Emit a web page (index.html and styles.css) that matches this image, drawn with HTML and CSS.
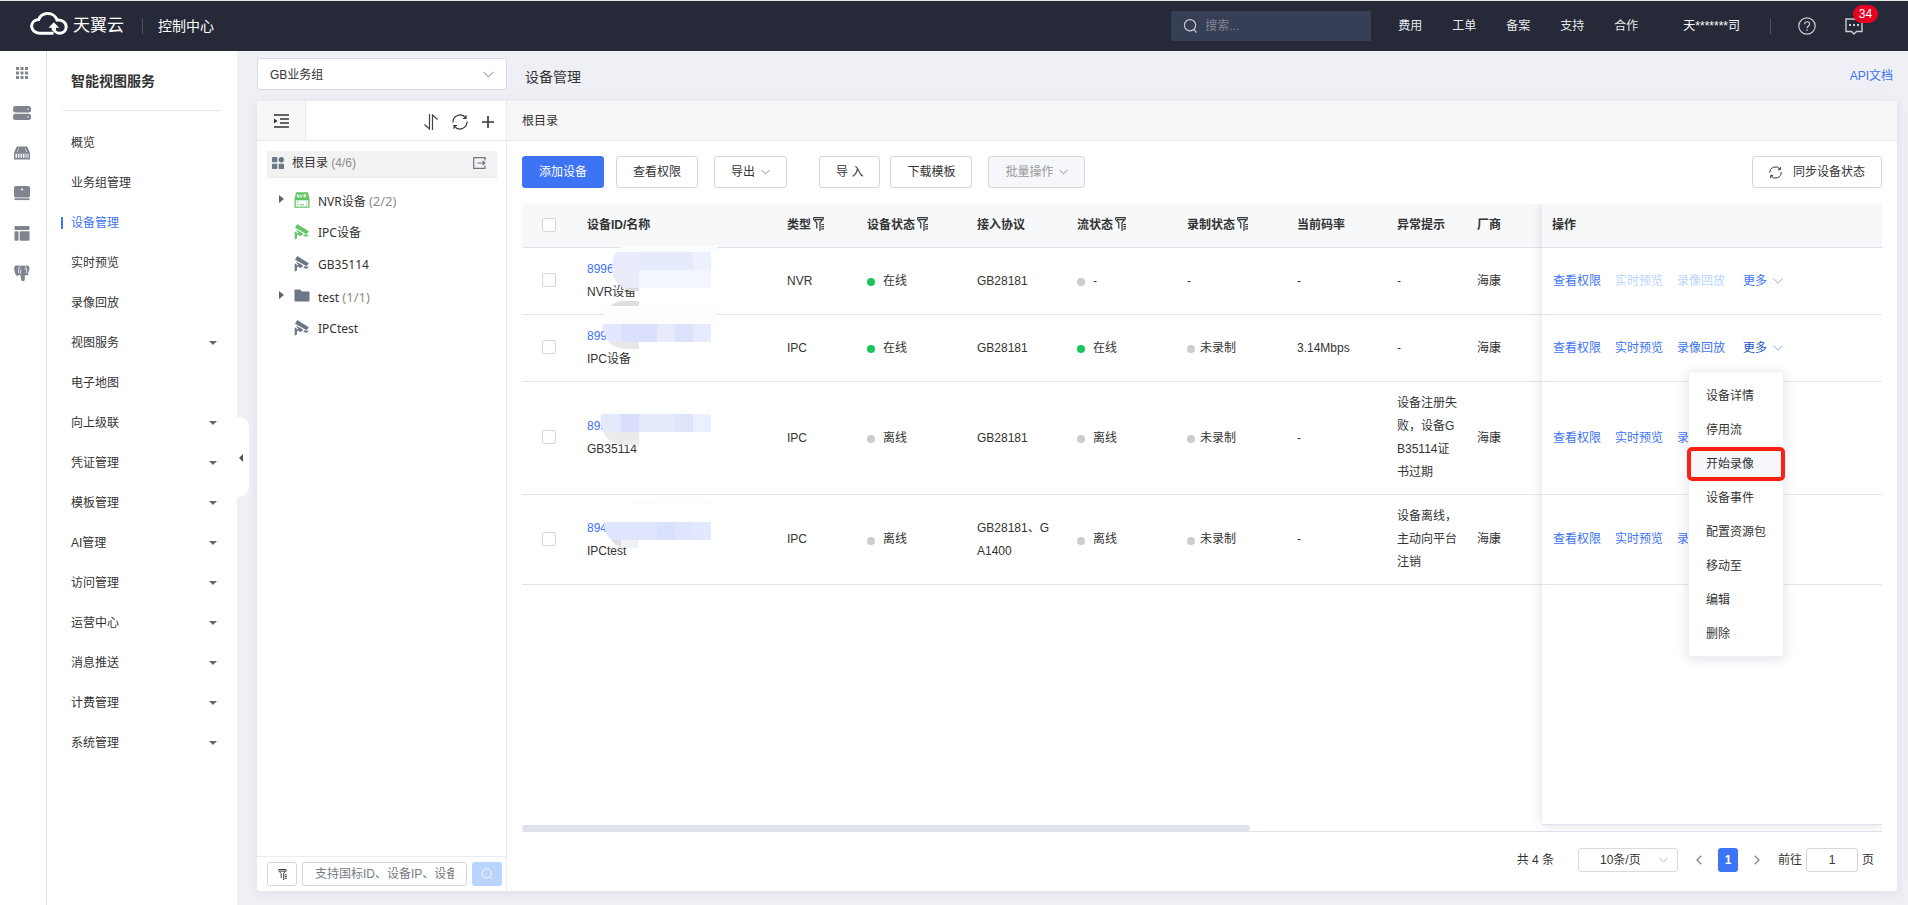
FILE: index.html
```html
<!DOCTYPE html>
<html lang="zh-CN">
<head>
<meta charset="utf-8">
<title>设备管理</title>
<link rel="stylesheet" href="styles.css">
</head>
<body>
<svg class="defs" aria-hidden="true">
  <symbol id="chevron" viewBox="0 0 10 6"><path d="M.5.7 5 5.200 9.500.7" fill="none" stroke="currentColor"/></symbol>
  <symbol id="caret" viewBox="0 0 8 4"><path d="M0 0h8L4 4z" fill="currentColor"/></symbol>
  <symbol id="caret-right" viewBox="0 0 5 8"><path d="M0 0l5 4-5 4z" fill="currentColor"/></symbol>
  <symbol id="filter" viewBox="0 0 11 14"><path d="M.6.7h9.600v1.600L7 5.500V14M.6.7v1.600l3.200 3.500v5.700M2 2.700h7M8.300 7.500H11M8.300 9.700H11M8.300 11.900H11" fill="none" stroke="currentColor" stroke-width="1.200"/></symbol>
  <symbol id="refresh" viewBox="0 0 16 16"><path d="M1 8.500A7 7 0 0 1 13.600 3.900M15 7.500A7 7 0 0 1 2.400 12.100M14 1.200v3.300h-3M2 14.800v-3.300h3" fill="none" stroke="currentColor" stroke-width="1.200"/></symbol>
  <symbol id="search" viewBox="0 0 16 16"><circle cx="7.500" cy="7.200" r="6" fill="none" stroke="currentColor" stroke-width="1.200"/><path d="M11.500 11.700l3 3.300" stroke="currentColor" stroke-width="1.200" fill="none"/></symbol>
  <symbol id="camera" viewBox="0 0 16 16"><path d="M3.200 0 14.800 7.300 12.600 10.200 1 3.800zM1.500 5.300 9 9.400 8.200 11.300 5.800 12 4.600 10.800 3 11v3.200L.7 15.800V7.500L2.600 8v1.500l1.800-.6zM10.200 10.300 14.800 11 13 12.800 9.400 12z" fill="currentColor"/></symbol>
</svg>

<header class="topbar">
  <a class="brand" href="#" aria-label="天翼云">
    <svg width="38" height="24" viewBox="0 0 38 24"><path d="M23.500 21.200H9.500C5 21.200 1.600 18 1.600 14.300 1.600 10.400 4.800 7.700 8.700 7.500 10.200 4 13.500 1.600 17.600 1.600c4.600 0 8.300 2.800 9.400 6.500 5-.5 9.200 2.300 9.200 6.700 0 3.800-3 6.500-6.800 6.500-3.400 0-5.900-2.800-5.900-7" fill="none" stroke="#fff" stroke-width="3"/><path d="M18.500 15.800l5.300-5.600 5.300 5.600h-3.200v2.700h-4.200v-2.700z" fill="#fff"/></svg>
    <span>天翼云</span>
  </a>
  <span class="rule"></span>
  <a class="console" href="#">控制中心</a>
  <label class="search"><svg width="15" height="16"><use href="#search"/></svg><input type="search" placeholder="搜索..." aria-label="搜索"></label>
  <nav class="topnav"><a href="#">费用</a><a href="#">工单</a><a href="#">备案</a><a href="#">支持</a><a href="#">合作</a></nav>
  <a class="user" href="#">天*******司</a>
  <span class="rule"></span>
  <a class="help" href="#" aria-label="帮助"><svg width="18" height="18" viewBox="0 0 18 18" fill="none" stroke="#c9ccd2" stroke-width="1.200"><circle cx="9" cy="9" r="8.200"/><path d="M6.600 7.200c0-3.300 5-3.200 5-.2 0 1.900-2.500 2-2.500 4.200M9.100 12.600v1.500"/></svg></a>
  <a class="msg" href="#" aria-label="消息"><svg width="18" height="17" viewBox="0 0 18 17" fill="none" stroke="#c9ccd2" stroke-width="1.400"><path d="M6.500 13.500H1V1h16v12.500h-5.500L9 16z"/><path d="M4 7h2M8 7h2M12 7h2" stroke-width="2"/></svg><span class="badge">34</span></a>
</header>

<div class="shell">
  <nav class="rail" aria-label="产品">
    <a href="#" aria-label="全部"><svg width="18" height="18" viewBox="0 0 18 18" fill="#80848f"><path d="M3 3h3v3H3zM7.500 3h3v3h-3zM12 3h3v3h-3zM3 7.500h3v3H3zM7.500 7.500h3v3h-3zM12 7.500h3v3h-3zM3 12h3v3H3zM7.500 12h3v3h-3zM12 12h3v3h-3z"/></svg></a>
    <a href="#" aria-label="服务器"><svg width="20" height="18" viewBox="0 0 20 18"><rect x="1" y="2" width="18" height="6.500" rx="2.500" fill="#80848f"/><rect x="1" y="9.800" width="18" height="6.200" rx="2.500" fill="#80848f"/><path d="M15.500 5.200h1M15.500 12.900h1" stroke="#fff" stroke-width="1.500"/></svg></a>
    <a href="#" aria-label="存储"><svg width="18" height="18" viewBox="0 0 18 18"><path d="M5 2.500h8c1 0 1.500.5 2 1.500l2 5V15.500H1V9l2-5c.5-1 1-1.500 2-1.500z" fill="#80848f"/><path d="M2.500 9.800h13v4h-13z" fill="#fff"/><path d="M4.500 10v4M7 10v4M9.500 10v4M12 10v4M14 10v4" stroke="#80848f" stroke-width="1.100"/><path d="M5 5h1M12 5h1M4 7h1M13 7h1" stroke="#fff"/></svg></a>
    <a href="#" aria-label="终端"><svg width="18" height="18" viewBox="0 0 18 18"><rect x="1" y="2" width="16" height="11.500" rx="2" fill="#80848f"/><path d="M1.500 15.200h15" stroke="#80848f" stroke-width="1.800"/><circle cx="9" cy="5.500" r="1" fill="#fff"/></svg></a>
    <a href="#" aria-label="网络"><svg width="18" height="18" viewBox="0 0 18 18" fill="#80848f"><rect x="1.500" y="2" width="15" height="4" rx="1"/><rect x="1.500" y="7.200" width="4" height="9.500" rx="1"/><rect x="6.700" y="7.200" width="9.800" height="9.500" rx="1"/></svg></a>
    <a href="#" aria-label="数据库"><svg width="18" height="18" viewBox="0 0 18 18"><path d="M4 1.500C1 1 .8 4 1.500 7c.6 2.700 1.500 5 2.500 5 .9 0 1-1 2-1 .9 0 1 .4 1.500 0 .5 3 .5 6 2 6.300 1.800.3 2.300-1 2.300-3.300v-3c2.500.5 3.700 0 4.200-.8-1 0-1.500-.2-1.200-.8C16.500 6.500 17.500 3 15 1.700 13.300 1 12 2 11 1.800 9.600 1.300 8.500 1.700 7.600 2 6.500 1.500 5.300 1.500 4 1.500z" fill="#80848f"/><path d="M6.800 2.500C5.500 4 5.800 6 5.600 9M7 10c1-1.500.8-3 .8-4.300M12.500 2.500c1.600 2 1.300 4.500.4 6.500M11.300 5h1.200" fill="none" stroke="#fff" stroke-width=".8"/></svg></a>
  </nav>

  <aside class="sidebar">
    <h2>智能视图服务</h2>
    <nav class="menu">
      <a href="#">概览</a>
      <a href="#">业务组管理</a>
      <a href="#" class="active" aria-current="page">设备管理</a>
      <a href="#">实时预览</a>
      <a href="#">录像回放</a>
      <a href="#">视图服务<svg width="8" height="4"><use href="#caret"/></svg></a>
      <a href="#">电子地图</a>
      <a href="#">向上级联<svg width="8" height="4"><use href="#caret"/></svg></a>
      <a href="#">凭证管理<svg width="8" height="4"><use href="#caret"/></svg></a>
      <a href="#">模板管理<svg width="8" height="4"><use href="#caret"/></svg></a>
      <a href="#">AI管理<svg width="8" height="4"><use href="#caret"/></svg></a>
      <a href="#">访问管理<svg width="8" height="4"><use href="#caret"/></svg></a>
      <a href="#">运营中心<svg width="8" height="4"><use href="#caret"/></svg></a>
      <a href="#">消息推送<svg width="8" height="4"><use href="#caret"/></svg></a>
      <a href="#">计费管理<svg width="8" height="4"><use href="#caret"/></svg></a>
      <a href="#">系统管理<svg width="8" height="4"><use href="#caret"/></svg></a>
    </nav>
    <button class="fold" type="button" aria-label="收起菜单"><svg width="4" height="8" viewBox="0 0 4 8"><path d="M4 0v8L0 4z" fill="#555"/></svg></button>
  </aside>

  <main class="main">
    <div class="heading">
      <div class="select group-select"><select aria-label="业务组"><option>GB业务组</option></select><svg width="11" height="7"><use href="#chevron"/></svg></div>
      <h1>设备管理</h1>
      <a class="doc" href="#">API文档</a>
    </div>

    <div class="panel">
      <section class="tree">
        <div class="tree-bar">
          <button class="toggle" type="button" aria-label="折叠目录"><svg width="15" height="14" viewBox="0 0 15 14"><path d="M0 1h15M6 5h9M6 9h9M0 13h15" stroke="#333" stroke-width="1.400"/><path d="M0 4.500v5L3.500 7z" fill="#333"/></svg></button>
          <div class="tools">
            <button type="button" aria-label="排序"><svg width="14" height="16" viewBox="0 0 14 16" fill="none" stroke="#444" stroke-width="1.200"><path d="M5.500 0v15L.5 10.500M8.500 16V1l5 4.500"/></svg></button>
            <button type="button" aria-label="刷新"><svg width="16" height="16"><use href="#refresh"/></svg></button>
            <button type="button" aria-label="添加"><svg width="12" height="12" viewBox="0 0 12 12"><path d="M6 0v12M0 6h12" stroke="#333" stroke-width="1.600"/></svg></button>
          </div>
        </div>
        <div class="tree-body">
          <div class="root"><svg width="12" height="12" viewBox="0 0 12 12" fill="#6b7686"><rect width="5.300" height="5.300" rx=".8"/><circle cx="9.300" cy="2.700" r="2.700"/><rect y="6.700" width="5.300" height="5.300" rx=".8"/><rect x="6.700" y="6.700" width="5.300" height="5.300" rx=".8"/></svg><span>根目录 <i>(4/6)</i></span><svg class="out" width="13" height="12" viewBox="0 0 13 12" fill="none" stroke="#6b7686" stroke-width="1.200"><path d="M12 3.500V.7H.7v10.600H12V8.500M4.500 6H11.500M9.500 4l2.300 2-2.300 2"/></svg></div>
          <ul>
            <li><svg class="arrow" width="5" height="8"><use href="#caret-right"/></svg><svg class="kind" width="16" height="16" viewBox="0 0 16 16"><path d="M2 .2h12l1.500 7v8.600H.5V7.200z" fill="#64c566"/><path d="M1.800 8.300h12.400v6.200H1.800z" fill="#fff"/><path d="M3.300 5.500v-3l1.700 3v-3M6.300 2.500l1 3 1-3M10 5.500v-3h1.700v1.500H10l2 1.500" stroke="#fff" stroke-width=".8" fill="none"/><path d="M3 10h1.500M3 12.700h1.500M6 12.700h4M12 10h1M12 12.700h1" stroke="#64c566"/></svg><span>NVR设备 <i>(2/2)</i></span></li>
            <li><span class="arrow"></span><svg class="kind on" width="16" height="16"><use href="#camera"/></svg><span>IPC设备</span></li>
            <li><span class="arrow"></span><svg class="kind" width="16" height="16"><use href="#camera"/></svg><span>GB35114</span></li>
            <li><svg class="arrow" width="5" height="8"><use href="#caret-right"/></svg><svg class="kind" width="16" height="16" viewBox="0 0 16 16"><path d="M1.500 1.500H6l2 2h6.500c.6 0 1 .4 1 1v8c0 .6-.4 1-1 1h-13c-.6 0-1-.4-1-1v-10c0-.6.4-1 1-1z" fill="#6b7686"/></svg><span>test <i>(1/1)</i></span></li>
            <li><span class="arrow"></span><svg class="kind" width="16" height="16"><use href="#camera"/></svg><span>IPCtest</span></li>
          </ul>
        </div>
        <div class="tree-foot">
          <button type="button" class="btn small" aria-label="筛选"><svg width="9" height="11"><use href="#filter"/></svg></button>
          <input type="text" placeholder="支持国标ID、设备IP、设备名称" aria-label="搜索设备">
          <button type="button" class="go" aria-label="搜索"><svg width="12" height="12"><use href="#search"/></svg></button>
        </div>
      </section>

      <section class="content">
        <div class="crumb">根目录</div>
        <div class="toolbar">
          <button type="button" class="btn primary">添加设备</button>
          <button type="button" class="btn">查看权限</button>
          <button type="button" class="btn gap">导出<svg width="9" height="6"><use href="#chevron"/></svg></button>
          <button type="button" class="btn far">导 入</button>
          <button type="button" class="btn near">下载模板</button>
          <button type="button" class="btn gap" disabled>批量操作<svg width="9" height="6"><use href="#chevron"/></svg></button>
          <button type="button" class="btn sync"><svg width="13" height="13"><use href="#refresh"/></svg>同步设备状态</button>
        </div>

        <div class="table-wrap">
          <table>
            <colgroup><col class="c-check"><col><col class="c-80"><col class="c-110"><col class="c-100"><col class="c-110"><col class="c-110"><col class="c-100"><col class="c-80"><col class="c-vendor"><col class="c-ops"></colgroup>
            <thead><tr>
              <th><input type="checkbox" aria-label="全选"></th><th>设备ID/名称</th>
              <th>类型<svg class="f" width="11" height="14"><use href="#filter"/></svg></th>
              <th>设备状态<svg class="f" width="11" height="14"><use href="#filter"/></svg></th>
              <th>接入协议</th>
              <th>流状态<svg class="f" width="11" height="14"><use href="#filter"/></svg></th>
              <th>录制状态<svg class="f" width="11" height="14"><use href="#filter"/></svg></th>
              <th>当前码率</th><th>异常提示</th><th>厂商</th><th>操作</th>
            </tr></thead>
            <tbody>
              <tr>
                <td><input type="checkbox" aria-label="选择 NVR设备"></td>
                <td class="id"><a href="#">8996</a><br>NVR设备
                  <svg class="mask" width="150" height="60" viewBox="0 0 150 60"><path d="M43-2h97v6H40z" fill="#fbfcfe"/><path d="M39 4h95v18H35c0-8 1-14 4-18z" fill="#e8ecfd"/><path d="M62 4h36v18H62zM98 4h18v18H98z" fill="#e6eafd"/><path d="M116 4h18v18h-18z" fill="#edf1fe"/><path d="M35 22h99v18H48c-8-3-12-9-13-18z" fill="#f3f6fe"/><path d="M35 22h27v18H48c-8-3-12-9-13-18z" fill="#eaedf9"/><path d="M47 40h15v3h-6c-4 0-7-1-9-3z" fill="#dcdcdf"/><path d="M34 58c4-4 9-5 16-5h12v5z" fill="#dedede"/></svg></td>
                <td>NVR</td><td><span class="st on">在线</span></td><td>GB28181</td><td><span class="st">-</span></td><td>-</td><td>-</td><td>-</td><td>海康</td>
                <td class="ops"><div><a href="#">查看权限</a><a href="#" class="off" aria-disabled="true">实时预览</a><a href="#" class="off" aria-disabled="true">录像回放</a><button type="button">更多<svg width="10" height="6"><use href="#chevron"/></svg></button></div></td>
              </tr>
              <tr>
                <td><input type="checkbox" aria-label="选择 IPC设备"></td>
                <td class="id"><a href="#">899</a><br>IPC设备
                  <svg class="mask" width="150" height="60" viewBox="0 0 150 60"><path d="M27-9h107c3 2 6 5 6 9v9H26z" fill="#fdfdfd"/><path d="M25 9h109v18H32c-4-5-6-11-7-18z" fill="#e3e8fe"/><path d="M44 9h36v18H44z" fill="#dbe1fc"/><path d="M80 9h18v18H80zM116 9h18v18h-18z" fill="#e8ebfe"/><path d="M98 9h18v18H98z" fill="#dde2fc"/><path d="M32 27h30v7H50c-8 0-14-3-18-7z" fill="#e7e7e7"/></svg></td>
                <td>IPC</td><td><span class="st on">在线</span></td><td>GB28181</td><td><span class="st on">在线</span></td><td><span class="st rec">未录制</span></td><td>3.14Mbps</td><td>-</td><td>海康</td>
                <td class="ops"><div><a href="#">查看权限</a><a href="#">实时预览</a><a href="#">录像回放</a><button type="button" class="open" aria-expanded="true">更多<svg width="10" height="6"><use href="#chevron"/></svg></button></div>
                  <ul class="dropdown">
                    <li><button type="button">设备详情</button></li>
                    <li><button type="button">停用流</button></li>
                    <li><button type="button" class="marked">开始录像</button></li>
                    <li><button type="button">设备事件</button></li>
                    <li><button type="button">配置资源包</button></li>
                    <li><button type="button">移动至</button></li>
                    <li><button type="button">编辑</button></li>
                    <li><button type="button">删除</button></li>
                  </ul></td>
              </tr>
              <tr>
                <td><input type="checkbox" aria-label="选择 GB35114"></td>
                <td class="id"><a href="#">895</a><br>GB35114
                  <svg class="mask" width="150" height="100" viewBox="0 0 150 100"><path d="M24 32h110v18H26c-2-5-3-11-2-18z" fill="#e4e9fc"/><path d="M44 32h18v18H44z" fill="#d9defb"/><path d="M98 32h18v18H98z" fill="#dee4fb"/><path d="M116 32h18v18h-18z" fill="#ebeffe"/><path d="M26 50h36v13H50c-12 0-20-5-24-13z" fill="#ebebec"/></svg></td>
                <td>IPC</td><td><span class="st">离线</span></td><td>GB28181</td><td><span class="st">离线</span></td><td><span class="st rec">未录制</span></td><td>-</td><td>设备注册失败，设备GB35114证书过期</td><td>海康</td>
                <td class="ops"><div><a href="#">查看权限</a><a href="#">实时预览</a><a href="#">录像回放</a></div></td>
              </tr>
              <tr>
                <td><input type="checkbox" aria-label="选择 IPCtest"></td>
                <td class="id"><a href="#">894</a><br>IPCtest
                  <svg class="mask" width="150" height="80" viewBox="0 0 150 80"><path d="M40 9c25-4 60-8 80-6 10 0 16 3 20 6z" fill="#fdfdfe"/><path d="M27 27h107v18H34c-5-5-7-11-7-18z" fill="#dfe5fc"/><path d="M80 27h18v18H80z" fill="#dae1fc"/><path d="M116 27h18v18h-18z" fill="#e2e8fe"/><path d="M34 45h10v7c-4-1-7-4-10-7z" fill="#dcdde0"/><path d="M44 45h18v8H50l-6-1z" fill="#f1f2f6"/></svg></td>
                <td>IPC</td><td><span class="st">离线</span></td><td>GB28181、GA1400</td><td><span class="st">离线</span></td><td><span class="st rec">未录制</span></td><td>-</td><td>设备离线，主动向平台注销</td><td>海康</td>
                <td class="ops"><div><a href="#">查看权限</a><a href="#">实时预览</a><a href="#">录像回放</a></div></td>
              </tr>
            </tbody>
          </table>
          <div class="pinned"></div>
          <div class="scroll-thumb"></div>
        </div>

        <div class="pager">
          <span class="total">共 4 条</span>
          <div class="select size-select"><select aria-label="每页条数"><option>10条/页</option></select><svg width="9" height="6"><use href="#chevron"/></svg></div>
          <button type="button" aria-label="上一页"><svg width="6" height="10" viewBox="0 0 6 10"><path d="M5.300.7 1 5l4.300 4.300" fill="none" stroke="#888" stroke-width="1.300"/></svg></button>
          <button type="button" class="current">1</button>
          <button type="button" aria-label="下一页"><svg width="6" height="10" viewBox="0 0 6 10"><path d="M.7.7 5 5 .7 9.300" fill="none" stroke="#888" stroke-width="1.300"/></svg></button>
          <label>前往<input type="text" value="1">页</label>
        </div>
      </section>
    </div>
  </main>
</div>
</body>
</html>
```

FILE: styles.css
```css
* { box-sizing: border-box; }
body {
  margin: 0;
  min-height: 100vh;
  display: flex;
  flex-direction: column;
  background: #eff0f5;
  color: #333;
  font: 12px/16px "Liberation Sans", "Noto Sans CJK SC", sans-serif;
}
.defs { display: none; }
svg { flex: none; }
a { color: #3d73f5; text-decoration: none; }
button, input, select { font: inherit; color: inherit; }
button { background: none; border: 0; padding: 0; cursor: pointer; }
i { font-style: normal; color: #8c8c8c; }
h1, h2 { margin: 0; font-size: 14px; line-height: 20px; }

/* top bar */
.topbar {
  height: 51px;
  display: flex;
  align-items: center;
  padding: 0 45px 0 30px;
  background: #262a38;
  border-top: 1px solid #e3e5e6;
}
.topbar a { color: #e8e9eb; }
.brand { display: flex; align-items: center; gap: 5px; font-size: 17px; line-height: 24px; }
.brand svg { margin-bottom: 4px; }
.topbar .brand, .topbar .console, .topbar .user { color: #fff; }
.topbar .rule { width: 1px; height: 16px; background: #4d515d; }
.brand + .rule { margin-left: 18px; }
.console { margin-left: 15px; font-size: 14px; }
.search {
  display: flex;
  align-items: center;
  gap: 7px;
  width: 200px;
  height: 30px;
  margin-left: auto;
  padding-left: 12px;
  border-radius: 2px;
  background: #373f57;
  color: #c9ccd2;
}
.search input { width: 150px; background: none; border: 0; padding: 0; outline: 0; }
.search input::placeholder { color: #80848f; }
.topnav { display: flex; gap: 30px; margin-left: 27px; }
.user { margin-left: 45px; }
.user + .rule { margin-left: 30px; }
.help { display: flex; margin-left: 27px; }
.msg { display: flex; position: relative; margin-left: 29px; }
.badge {
  position: absolute;
  left: 8px;
  top: -13px;
  width: 25px;
  border-radius: 9px;
  background: #e60021;
  color: #fff;
  line-height: 18px;
  text-align: center;
}

.shell { flex: 1; display: flex; }

/* product rail */
.rail { width: 47px; border-right: 1px solid #dddfe8; background: #fff; padding-top: 2px; display: flex; flex-direction: column; }
.rail a { height: 40px; display: flex; align-items: center; justify-content: center; padding-right: 2px; }

/* sidebar */
.sidebar { position: relative; width: 190px; padding: 20px 16px 0; background: #fff; }
.sidebar h2 { padding: 0 8px 19px; border-bottom: 1px solid #e2e4ec; }
.menu { padding-top: 12px; display: flex; flex-direction: column; }
.menu a { position: relative; height: 40px; padding: 0 4px 0 8px; display: flex; align-items: center; justify-content: space-between; color: #333; }
.menu svg { color: #666; }
.menu a.active { color: #3d73f5; }
.menu a.active::before { content: ""; position: absolute; left: -2px; top: 14px; width: 2px; height: 12px; background: #3d73f5; }
.fold {
  position: absolute;
  left: 100%;
  top: 366px;
  width: 12px;
  height: 80px;
  padding: 2px 4px 0 0;
  border-radius: 0 10px 10px 0;
  background: #fff;
  display: flex;
  align-items: center;
  justify-content: center;
}

/* page heading */
.main { flex: 1; min-width: 0; display: flex; flex-direction: column; padding: 7px 11px 14px 20px; }
.heading { display: flex; align-items: center; padding-right: 4px; }
.heading h1 { margin-left: 18px; font-weight: 400; font-size: 14px; padding-top: 5px; }
.doc { margin-left: auto; padding-top: 4px; }
.select { position: relative; display: flex; align-items: center; }
.select select {
  width: 100%;
  height: 100%;
  appearance: none;
  border: 1px solid #d8dade;
  border-radius: 3px;
  background: #fff;
}
.select svg { position: absolute; color: #a8abb2; pointer-events: none; }
.group-select { width: 250px; height: 32px; }
.group-select select { padding: 2px 12px 0; }
.group-select svg { right: 13px; }

/* panel */
.panel { flex: 1; display: flex; margin-top: 11px; background: #fff; border-radius: 3px; box-shadow: 0 2px 12px rgba(60, 70, 110, .09); }
.tree { width: 250px; border-right: 1px solid #ebebeb; display: flex; flex-direction: column; }
.tree-bar { display: flex; height: 40px; border-bottom: 1px solid #ebebeb; }
.toggle { width: 49px; background: #f7f7f7; border-right: 1px solid #ebebeb; }
.tree-bar button { display: flex; align-items: center; justify-content: center; }
.tools { margin-left: auto; display: flex; gap: 14px; padding: 2px 12px 0 0; }
.tree-body { flex: 1; padding: 10px 9px 10px 10px; }
.root { height: 27px; display: flex; align-items: center; gap: 8px; padding: 0 11px 3px 5px; background: #f2f2f2; border-bottom: 1px solid #eaeaea; }
.out { margin-left: auto; }
.tree ul { list-style: none; margin: 0; padding: 7px 0 0 12px; }
.tree li { height: 32px; display: flex; align-items: center; font-family: "Noto Sans", "Noto Sans CJK SC", sans-serif; }
.tree li i { font-size: 13px; }
.arrow { width: 5px; margin: 0 10px 4px 0; color: #596372; }
.kind { margin: 0 8px 2px 0; color: #6b7686; }
.kind.on { color: #64c566; }
.tree-foot { display: flex; gap: 5px; padding: 5px 4px 5px 10px; border-top: 1px solid #ebebeb; }
.tree-foot input { flex: 1; min-width: 0; height: 24px; padding: 0 12px; border: 1px solid #d5d6d9; border-radius: 3px; }
.tree-foot input::placeholder { color: #757a85; }
.go { width: 30px; height: 24px; border-radius: 3px; background: #b9d5ff; color: #fff; display: flex; align-items: center; justify-content: center; }

.content { flex: 1; min-width: 0; display: flex; flex-direction: column; }
.crumb { height: 40px; padding: 12px 15px; background: #f7f7f7; border-bottom: 1px solid #ebebeb; }
.toolbar { display: flex; padding: 15px 15px 16px; }
.btn {
  height: 32px;
  display: flex;
  align-items: center;
  justify-content: center;
  gap: 6px;
  padding: 0 16px;
  border: 1px solid #d5d6d9;
  border-radius: 3px;
  background: #fff;
}
.btn + .btn { margin-left: 12px; }
.btn + .gap { margin-left: 16px; }
.btn + .far { margin-left: 32px; }
.btn + .near { margin-left: 10px; }
.btn + .sync { margin-left: auto; gap: 11px; }
.btn svg { color: #888; }
.btn.primary { background: #3d73f5; border-color: #3d73f5; color: #fff; }
.btn:disabled { background: #f5f7fa; color: #999; }
.btn.sync svg, .btn.small svg { color: #333; }
.btn.small { width: 30px; height: 24px; padding: 0; }

/* table */
.table-wrap { position: relative; flex: 1; margin: 0 15px; overflow: hidden; border-bottom: 1px solid #dfe1ea; }
table { width: 100%; table-layout: fixed; border-collapse: separate; border-spacing: 0; line-height: 23px; }
.c-check { width: 55px; }
.c-80 { width: 80px; }
.c-100 { width: 100px; }
.c-110 { width: 110px; }
.c-vendor { width: 75px; }
.c-ops { width: 340px; }
th, td { padding: 10px; text-align: left; vertical-align: middle; border-bottom: 1px solid #e1e3ec; word-break: break-all; }
th { background: #f7f8fa; font-weight: 700; white-space: nowrap; }
th:first-child, td:first-child { padding: 0 20px 2px; }
input[type="checkbox"] { appearance: none; display: block; width: 14px; height: 14px; margin: 0; border: 1px solid #d5d6d9; border-radius: 2px; background: #fff; }
.f { margin: -4px 0 0 2px; vertical-align: -2px; }
.id, .ops { position: relative; }
.mask { position: absolute; left: 0; top: 0; overflow: visible; z-index: 1; }
.st { display: flex; align-items: center; gap: 8px; }
.st::before { content: ""; width: 8px; height: 8px; margin-top: 2px; border-radius: 50%; background: #ccc; }
.st.on::before { background: #1bc55c; }
.st.rec { gap: 5px; }
td.ops { padding-left: 11px; }
.ops > div { display: flex; align-items: center; gap: 14px; }
.ops > div button { display: flex; align-items: center; gap: 6px; margin-left: 4px; color: #3d73f5; }
.ops > div .open { color: #2455cc; }
.ops > div svg { color: #8aa8f0; }
.ops .off { color: #b9d5ff; }
.dropdown {
  position: absolute;
  left: 146px;
  top: 56px;
  z-index: 3;
  width: 96px;
  margin: 0;
  padding: 7px 0 5px;
  list-style: none;
  background: #fff;
  border: 1px solid #eef0f5;
  border-radius: 3px;
  box-shadow: 0 2px 12px rgba(60, 70, 110, .16);
}
.dropdown li { display: flex; height: 34px; }
.dropdown button { flex: 1; padding-left: 17px; text-align: left; white-space: nowrap; }
.dropdown .marked { margin: 0 -2px; padding-left: 15px; background: #f5f7fa; border: 4px solid #ff2014; border-radius: 5px; }
.pinned { position: absolute; right: 0; top: 0; bottom: 6px; width: 340px; border-bottom: 1px solid #e1e3ec; box-shadow: 0 0 10px rgba(60, 70, 110, .18); pointer-events: none; }
.scroll-thumb { position: absolute; left: 0; bottom: 0; width: 53.5%; height: 6px; border-radius: 3px; background: #dfe2ec; }

/* pagination */
.pager { display: flex; align-items: center; justify-content: flex-end; padding: 16px 23px 19px; }
.size-select { width: 100px; height: 24px; margin: 0 18px 0 24px; }
.size-select select { padding: 0 21px; }
.size-select svg { right: 10px; }
.pager button { height: 24px; display: flex; align-items: center; }
.pager .current { width: 20px; margin: 0 16px; justify-content: center; border-radius: 3px; background: #3d73f5; color: #fff; font-weight: 700; }
.pager label { display: flex; align-items: center; gap: 4px; margin-left: 18px; }
.pager input { width: 52px; height: 24px; padding: 0; border: 1px solid #d5d6d9; border-radius: 3px; text-align: center; }
```
